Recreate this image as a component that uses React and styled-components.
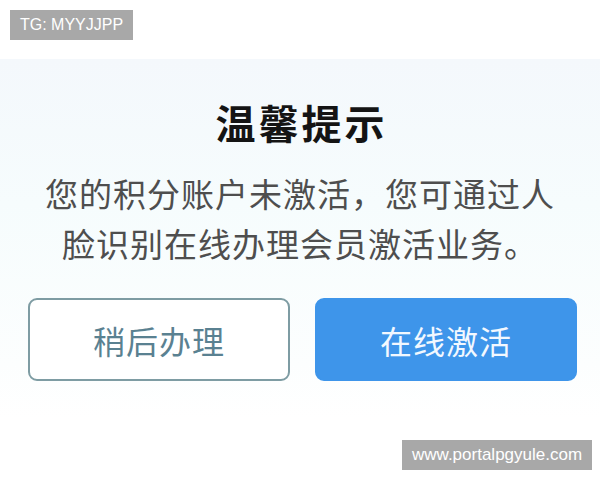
import styled, { createGlobalStyle } from 'styled-components';

const GlobalStyle = createGlobalStyle`
  html, body {
    margin: 0;
    padding: 0;
    background: #ffffff;
  }
  body {
    font-family: "Noto Sans CJK SC", "Noto Sans", sans-serif;
  }
`;

const Page = styled.div`
  position: relative;
  width: 600px;
  height: 480px;
  overflow: hidden;
  background: #ffffff;
`;

const TopGap = styled.div`
  height: 59px;
`;

const Panel = styled.div`
  display: flex;
  flex-direction: column;
  align-items: center;
  padding-top: 42px;
  height: 360px;
  background: linear-gradient(180deg, #f4f8fc 0%, #f6fcfd 40%, #fcfefe 85%, #ffffff 100%);
  box-sizing: border-box;
`;

const Title = styled.h1`
  margin: 0 0 0 3px;
  font-size: 40px;
  line-height: 42px;
  font-weight: 700;
  letter-spacing: 3px;
  color: #141414;
`;

const Message = styled.p`
  margin: 25px 0 0;
  width: 540px;
  font-size: 33px;
  line-height: 50px;
  letter-spacing: 1px;
  color: #4e4e4e;
  text-align: center;
`;

const Actions = styled.div`
  display: flex;
  gap: 25px;
  margin: 30px 0 0 5px;
`;

const Button = styled.button`
  width: 262px;
  height: 83px;
  border-radius: 9px;
  box-sizing: border-box;
  font-family: "Noto Sans CJK SC", sans-serif;
  font-size: 32px;
  letter-spacing: 1px;
  cursor: pointer;
  border: 2px solid ${p => (p.$primary ? '#3e95ea' : '#7e9ca3')};
  background: ${p => (p.$primary ? '#3e95ea' : '#ffffff')};
  color: ${p => (p.$primary ? '#f2f8ff' : '#5a8191')};
`;

const Watermark = styled.div`
  position: absolute;
  top: ${p => p.$top}px;
  left: ${p => p.$left}px;
  height: 30px;
  padding: 0 10px;
  display: flex;
  align-items: center;
  background: #a8a8a8;
  color: #ffffff;
  font-family: "Liberation Sans", Arial, sans-serif;
  font-size: ${p => p.$size}px;
`;

export default function App() {
  return (
    <Page>
      <GlobalStyle />
      <TopGap />
      <Panel>
        <Title>温馨提示</Title>
        <Message>
          您的积分账户未激活，您可通过人脸识别在线办理会员激活业务。
        </Message>
        <Actions>
          <Button>稍后办理</Button>
          <Button $primary>在线激活</Button>
        </Actions>
      </Panel>
      <Watermark $top={10} $left={10} $size={16}>TG: MYYJJPP</Watermark>
      <Watermark $top={440} $left={402} $size={17}>www.portalpgyule.com</Watermark>
    </Page>
  );
}
